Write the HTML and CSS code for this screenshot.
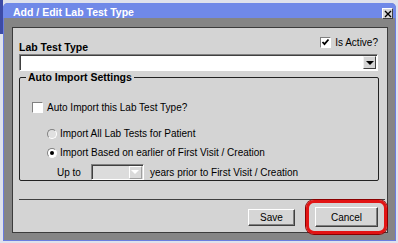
FILE: index.html
```html
<!DOCTYPE html>
<html lang="en">
    <head>
        <meta charset="UTF-8">
        <title>Add / Edit Lab Test Type</title>
        <link rel="stylesheet" href="styles.css">
    </head>
    <body>
        <div class="window">
            <div class="titlebar">
                <span class="title">Add / Edit Lab Test Type</span>
                <span class="close">
                    <svg width="8" height="8" viewBox="0 0 8 8"><path d="M1 1L7 7M7 1L1 7" stroke="#000" stroke-width="1.4"/></svg>
                </span>
            </div>

            <div class="panel">
                <div class="header-row">
                    <span class="field-label">Lab Test Type</span>
                    <label class="check-label">
                        <span class="checkbox">
                            <svg width="9" height="9" viewBox="0 0 9 9"><path d="M1.5 4L3.5 6.2L7.5 1.5" stroke="#000" stroke-width="1.8" fill="none"/></svg>
                        </span>
                        Is Active?
                    </label>
                </div>

                <div class="select">
                    <span class="select-value"></span>
                    <span class="drop"><span class="arrow"></span></span>
                </div>

                <fieldset class="group">
                    <legend>Auto Import Settings</legend>

                    <div class="row row-auto">
                        <span class="checkbox"></span>
                        <span>Auto Import this Lab Test Type?</span>
                    </div>

                    <div class="row row-radio first">
                        <span class="radio"></span>
                        <span>Import All Lab Tests for Patient</span>
                    </div>

                    <div class="row row-radio">
                        <span class="radio on"><span class="dot"></span></span>
                        <span>Import Based on earlier of First Visit / Creation</span>
                    </div>

                    <div class="row row-upto">
                        <span>Up to</span>
                        <span class="select small disabled">
                            <span class="select-value"></span>
                            <span class="drop"><span class="arrow"></span></span>
                        </span>
                        <span>years prior to First Visit / Creation</span>
                    </div>
                </fieldset>

                <div class="divider"></div>

                <div class="buttons">
                    <button class="btn btn-save">Save</button>
                    <span class="highlight">
                        <button class="btn btn-cancel">Cancel</button>
                    </span>
                </div>
            </div>
        </div>
    </body>
</html>
```

FILE: styles.css
```css
html, body {
    margin: 0;
    width: 398px;
    height: 243px;
    overflow: hidden;
}

body {
    background: linear-gradient(#3d4ba6, #3d4ba6) 0 0 / 3px 34px no-repeat, #dfe2ec;
    font-family: "Liberation Sans", Arial, sans-serif;
    font-size: 10px;
    color: #000;
}

.window {
    box-sizing: border-box;
    margin: 3px 0 0 3px;
    width: 393px;
    height: 238px;
    background-color: #858585;
    border: 1px solid #6a7de0;
    border-top: none;
    border-radius: 5px 5px 0 0;
}

.titlebar {
    height: 15px;
    margin: 0 -1px;
    padding: 0 3px 0 10px;
    background-color: #7089e8;
    border-radius: 5px 5px 0 0;
    display: flex;
    align-items: center;
    justify-content: space-between;
}

.title {
    color: #fff;
    font-weight: bold;
    font-size: 10.5px;
    padding-top: 2px;
}

.close {
    width: 9px;
    height: 9px;
    margin-top: 6px;
    background-color: #d8d8d8;
    border: 1px solid;
    border-color: #fff #404040 #404040 #fff;
    display: flex;
    align-items: center;
    justify-content: center;
}

.panel {
    box-sizing: border-box;
    width: 376px;
    height: 206px;
    margin: 9px 0 0 8px;
    padding: 9px 9px 0 6px;
    background-color: #d4d4d4;
    border: 1px solid #3c3c3c;
}

.header-row {
    height: 17px;
    display: flex;
    justify-content: space-between;
    align-items: flex-start;
}

.field-label {
    font-weight: bold;
    font-size: 10.5px;
    line-height: 13px;
    margin-top: 4px;
}

.check-label {
    display: flex;
    align-items: center;
    gap: 4px;
    font-size: 10px;
}

.checkbox {
    box-sizing: border-box;
    width: 11px;
    height: 11px;
    background-color: #fff;
    border: 1px solid;
    border-color: #808080 #fff #fff #808080;
    display: flex;
    align-items: center;
    justify-content: center;
}

.select {
    box-sizing: border-box;
    width: 359px;
    height: 17px;
    background-color: #fff;
    border: 1px solid;
    border-color: #808080 #fff #fff #808080;
    box-shadow: inset 1px 1px #404040;
    display: flex;
    justify-content: flex-end;
    align-items: center;
    padding-right: 1px;
}

.drop {
    box-sizing: border-box;
    width: 13px;
    height: 13px;
    background-color: #d4d4d4;
    border: 1px solid;
    border-color: #f0f0f0 #404040 #404040 #f0f0f0;
    display: flex;
    align-items: center;
    justify-content: center;
}

.arrow {
    width: 0;
    height: 0;
    border-left: 4px solid transparent;
    border-right: 4px solid transparent;
    border-top: 4px solid #000;
}

.group {
    margin: 0;
    padding: 0 0 0 12px;
    width: 360px;
    box-sizing: border-box;
    height: 110px;
    border: 1px solid #222;
    border-radius: 2px;
}

.group legend {
    margin-left: -6px;
    padding: 0 2px;
    font-weight: bold;
    font-size: 10.5px;
    line-height: 13px;
}

.row {
    display: flex;
    align-items: center;
    height: 13px;
    gap: 4px;
}

.row-auto {
    margin-top: 17px;
}

.row-radio {
    padding-left: 15px;
    gap: 3px;
    margin-top: 6px;
}

.row-radio.first {
    margin-top: 13px;
}

.radio {
    box-sizing: border-box;
    width: 10px;
    height: 10px;
    border-radius: 50%;
    background-color: #e0e0e0;
    border: 1px solid;
    border-color: #808080 #fff #fff #808080;
    display: flex;
    align-items: center;
    justify-content: center;
}

.radio.on {
    background-color: #fff;
}

.dot {
    width: 4px;
    height: 4px;
    border-radius: 50%;
    background-color: #000;
}

.row-upto {
    height: 16px;
    margin-top: 5px;
    padding-left: 25px;
    gap: 0;
}

.select.small {
    width: 53px;
    height: 16px;
    margin: 0 6px 0 10px;
}

.select.disabled {
    background-color: #dcdcdc;
}

.select.disabled .drop {
    background-color: #dadada;
    border-color: #fff #a0a0a0 #a0a0a0 #fff;
}

.select.disabled .arrow {
    border-top-color: #fff;
}

.divider {
    margin: 18px -7px 0 0;
    height: 1px;
    background-color: #404040;
}

.buttons {
    margin-top: 7px;
    height: 20px;
    display: flex;
    justify-content: flex-end;
    align-items: center;
    gap: 20px;
}

.btn {
    box-sizing: border-box;
    font-family: "Liberation Sans", Arial, sans-serif;
    font-size: 10px;
    color: #000;
    background-color: #d6d6d6;
    border: 1px solid;
    border-color: #fff #404040 #404040 #fff;
    box-shadow: inset -1px -1px #808080;
    padding: 0;
}

.btn-save {
    width: 47px;
    height: 17px;
}

.btn-cancel {
    width: 63px;
    height: 20px;
}

.highlight {
    position: relative;
    display: flex;
}

.highlight::after {
    content: "";
    position: absolute;
    top: -7px;
    left: -9px;
    right: -9px;
    bottom: -7px;
    border: 3px solid #e21414;
    border-radius: 8px;
    box-shadow: 0 0 0 1px #8a0000;
}
```
